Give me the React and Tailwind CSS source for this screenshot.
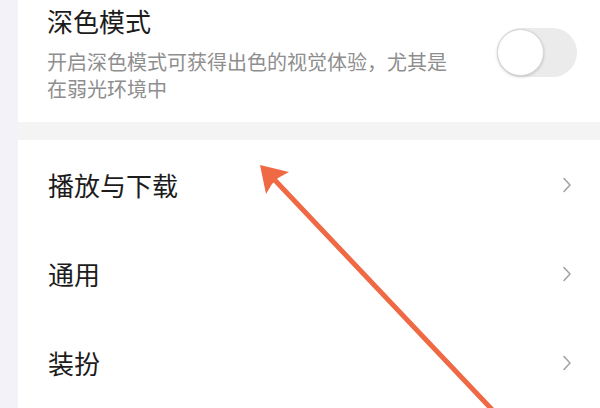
import React from "react";

function Chevron() {
  return (
    <svg width="10" height="16" viewBox="0 0 10 16" className="shrink-0">
      <path d="M2 1.5 L8 8 L2 14.5" fill="none" stroke="#a3a3a3" strokeWidth="1.6" strokeLinecap="round" strokeLinejoin="round" />
    </svg>
  );
}

function Row({ label }) {
  return (
    <div className="h-[89px] flex items-center pl-[30px] pr-[28px]">
      <span className="text-[26px] leading-[34px] text-[#1c1c1c]">{label}</span>
      <div className="ml-auto">
        <Chevron />
      </div>
    </div>
  );
}

export default function App() {
  return (
    <div
      className="w-[600px] h-[408px] overflow-hidden relative flex bg-[#f3f2f9]"
      style={{ fontFamily: '"Noto Sans CJK SC", "Noto Sans", sans-serif' }}
    >
      <div className="w-[18px] shrink-0" />
      <div className="flex-1 flex flex-col bg-[#f4f4f5]">
        <div className="h-[122px] bg-white flex items-start pl-[29px] pr-[23px] shrink-0">
          <div className="flex flex-col pt-[4px]">
            <div className="text-[26px] leading-[34px] text-[#1c1c1c]">深色模式</div>
            <div className="mt-[10px] w-[410px] text-[20px] leading-[27px] text-[#8e8e8e]">
              开启深色模式可获得出色的视觉体验，尤其是在弱光环境中
            </div>
          </div>
          <div className="ml-auto mt-[28px] w-[80px] h-[49px] rounded-full bg-[#ebebeb] relative shrink-0">
            <div className="absolute left-0 top-[1px] w-[47px] h-[47px] rounded-full bg-white border border-[#d6d6d6] shadow-[0_1px_3px_rgba(0,0,0,0.18)]" />
          </div>
        </div>
        <div className="h-[18px] shrink-0" />
        <div className="flex-1 bg-white flex flex-col">
          <Row label="播放与下载" />
          <Row label="通用" />
          <Row label="装扮" />
        </div>
      </div>
      <svg className="absolute inset-0 pointer-events-none" width="600" height="408" viewBox="0 0 600 408">
        <line x1="270" y1="175" x2="500" y2="418" stroke="#ef6a44" strokeWidth="5" strokeLinecap="round" />
        <polygon points="260,165 289,172 278,178 272,184 266,194" fill="#ef6a44" />
      </svg>
    </div>
  );
}
